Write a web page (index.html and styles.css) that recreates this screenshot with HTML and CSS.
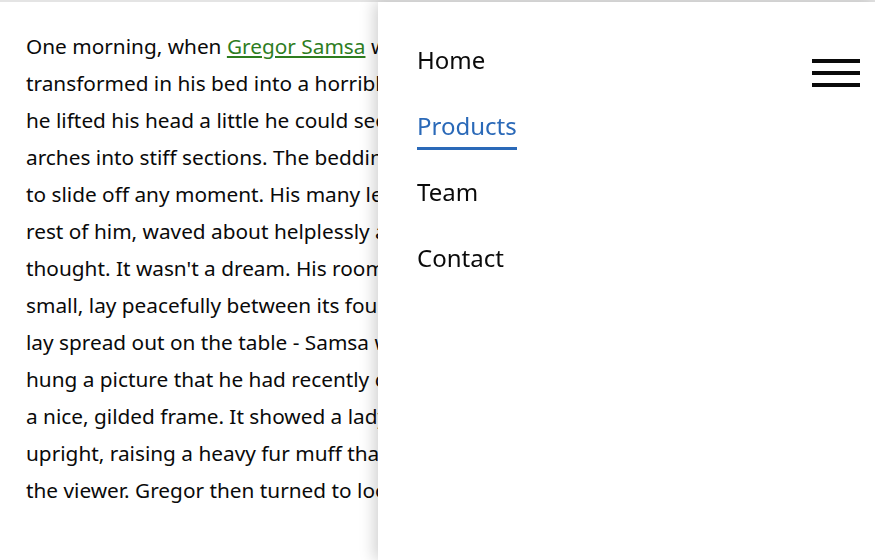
FILE: index.html
```html
<!DOCTYPE html>
<html lang="en">
<head>
<meta charset="UTF-8" />
<title>Off-canvas menu</title>
<link rel="stylesheet" href="styles.css">
</head>
<body>

<main class="content">
  <p>
    One morning, when <a href="#">Gregor Samsa</a> woke from troubled dreams, he found himself<br>
    transformed in his bed into a horrible vermin. He lay on his armour-like back, and if<br>
    he lifted his head a little he could see his brown belly, slightly domed and divided by<br>
    arches into stiff sections. The bedding was hardly able to cover it and seemed ready<br>
    to slide off any moment. His many legs, pitifully thin compared with the size of the<br>
    rest of him, waved about helplessly as he looked. "What's happened to me?" he<br>
    thought. It wasn't a dream. His room, a proper human room although a little too<br>
    small, lay peacefully between its four familiar walls. A collection of textile samples<br>
    lay spread out on the table - Samsa was a travelling salesman - and above it there<br>
    hung a picture that he had recently cut out of an illustrated magazine and housed in<br>
    a nice, gilded frame. It showed a lady fitted out with a fur hat and fur boa who sat<br>
    upright, raising a heavy fur muff that covered the whole of her lower arm towards<br>
    the viewer. Gregor then turned to look out the window at the dull weather.
  </p>
</main>

<aside class="drawer">
  <nav>
    <ul class="menu">
      <li><a href="#">Home</a></li>
      <li><a href="#" class="active">Products</a></li>
      <li><a href="#">Team</a></li>
      <li><a href="#">Contact</a></li>
    </ul>
  </nav>
  <button class="burger" aria-label="Close menu">
    <span></span><span></span><span></span>
  </button>
</aside>

</body>
</html>
```

FILE: styles.css
```css
html {
  border-top: 2px solid #e4e4e4;
}
body {
  margin: 0;
  font-family: "Noto Sans", "Open Sans", sans-serif;
  color: #0a0a0a;
  background: #fff;
}
.content {
  padding: 26px 26px;
  overflow: hidden;
}
.content p {
  margin: 0;
  white-space: nowrap;
  font-size: 20.8px;
  line-height: 37px;
}
.content a {
  color: #2e7d1f;
}

.drawer {
  position: fixed;
  top: 2px;
  left: 378px;
  right: 0;
  bottom: 0;
  background: #fff;
  box-shadow: -4px 0 14px rgba(0, 0, 0, 0.18);
  display: flex;
  justify-content: space-between;
  align-items: flex-start;
  padding: 0 15px 0 39px;
}
.menu {
  list-style: none;
  margin: 0;
  padding: 37px 0 0;
}
.menu li {
  margin-bottom: 21px;
}
.menu a {
  display: inline-block;
  font-size: 24px;
  line-height: 42px;
  color: #0a0a0a;
  text-decoration: none;
  border-bottom: 3px solid transparent;
}
.menu a.active {
  color: #2a69b8;
  border-bottom-color: #2a69b8;
}

.burger {
  margin-top: 57px;
  width: 48px;
  padding: 0;
  border: 0;
  background: none;
  display: flex;
  flex-direction: column;
  gap: 8px;
  cursor: pointer;
}
.burger span {
  display: block;
  height: 4px;
  background: #0a0a0a;
}
```
